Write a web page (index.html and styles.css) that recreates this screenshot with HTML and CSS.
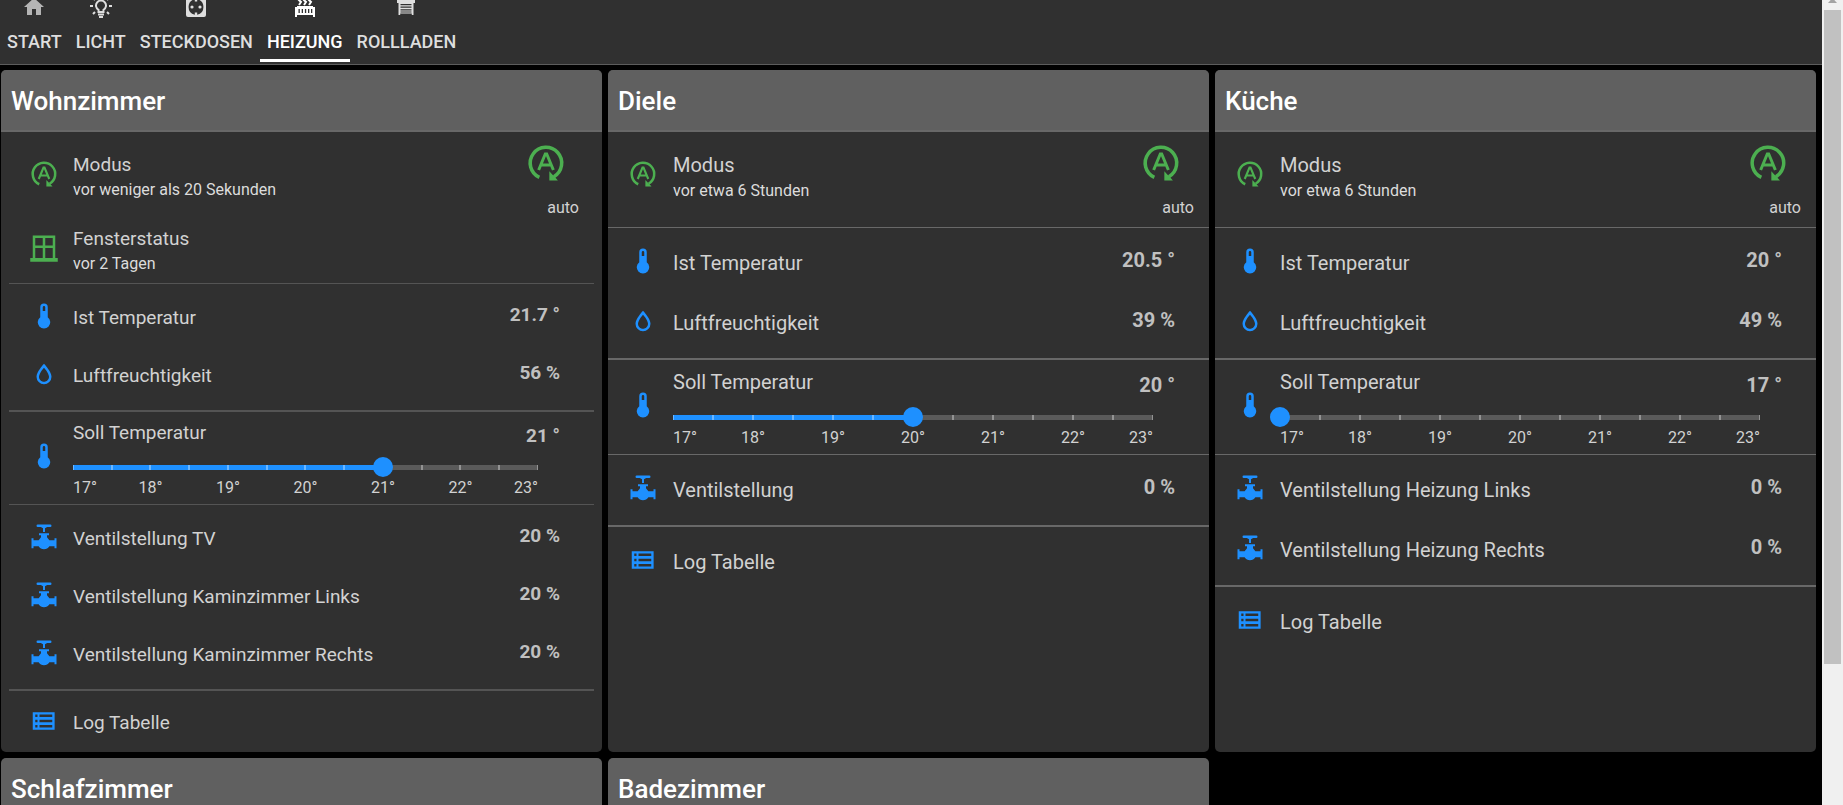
FILE: index.html
```html
<!DOCTYPE html>
<html lang="de">
<head>
<meta charset="utf-8">
<title>Heizung</title>
<link rel="stylesheet" href="styles.css">
</head>
<body>
<svg class="sprite" aria-hidden="true">
  <symbol id="i-home" viewBox="0 0 24 24"><path fill="currentColor" d="M10 20V14H14V20H19V12H22L12 3L2 12H5V20Z"/></symbol>
  <symbol id="i-bulb" viewBox="0 0 24 24"><g fill="none" stroke="currentColor" stroke-width="2"><path d="M9.5 17V14.9A5 5 0 1 1 14.5 14.9V17Z"/><path d="M9 19.5H15M10 22H14M1 11H4M20 11H23M4 3L6 5M20 3L18 5M4 19L6 17M20 19L18 17"/></g></symbol>
  <symbol id="i-socket" viewBox="0 0 24 24"><path fill="currentColor" fill-rule="evenodd" d="M4 2H20A2 2 0 0 1 22 4V20A2 2 0 0 1 20 22H4A2 2 0 0 1 2 20V4A2 2 0 0 1 4 2ZM10.8 4.2A8 8 0 0 0 10.8 19.8V17.5H13.2V19.8A8 8 0 0 0 13.2 4.2V6.5H10.8ZM8 10.4A1.6 1.6 0 1 1 8 13.6A1.6 1.6 0 1 1 8 10.4ZM16 10.4A1.6 1.6 0 1 1 16 13.6A1.6 1.6 0 1 1 16 10.4Z"/></symbol>
  <symbol id="i-radiator" viewBox="0 0 24 24"><path fill="currentColor" fill-rule="evenodd" d="M2 12H4V11H20V12H22V22H20V20H4V22H2ZM5.5 14V18H6.8V14ZM8.7 14V18H10V14ZM11.9 14V18H13.2V14ZM15 14V18H16.3V14ZM18 14V18H19.3V14Z"/><path fill="none" stroke="currentColor" stroke-width="2" d="M6 10L8 7L6 5L8 2M11 10L13 7L11 5L13 2M16 10L18 7L16 5L18 2"/></symbol>
  <symbol id="i-shutter" viewBox="0 0 24 24"><path fill="currentColor" fill-rule="evenodd" d="M3 4H21V8H19.5V20H17.8V18.6H6.2V20H4.5V8H3ZM6.5 9V10.2H17.5V9ZM6.5 11.6V12.8H17.5V11.6ZM6.5 14.2V15.4H17.5V14.2ZM6.5 16.6V17.4H17.5V16.6Z"/></symbol>
  <symbol id="i-auto" viewBox="0 0 24 24"><g fill="none" stroke="currentColor"><path stroke-width="2" d="M8.2 20.2A9 9 0 1 1 16.5 19.8"/><path stroke-width="1.7" d="M7.8 16L11.6 6.8H12.4L16.2 16M9.2 13.2H14.8"/></g><path fill="currentColor" d="M13.9 16.7V22H18.8L17.2 20.2L15.6 18.6Z"/></symbol>
  <symbol id="i-window" viewBox="0 0 24 24"><path fill="currentColor" fill-rule="evenodd" d="M21 20V2H3V20H1V23H23V20ZM11 4V10H5V4ZM19 4V10H13V4ZM11 12V20H5V12ZM19 12V20H13V12Z"/></symbol>
  <symbol id="i-thermo" viewBox="0 0 24 24"><path fill="currentColor" fill-rule="evenodd" d="M15 13V5A3 3 0 0 0 9 5V13A5 5 0 1 0 15 13M12 4A1 1 0 0 1 13 5V8H11V5A1 1 0 0 1 12 4Z"/></symbol>
  <symbol id="i-drop" viewBox="0 0 24 24"><path fill="currentColor" fill-rule="evenodd" d="M12,3.77L11.25,4.61C11.25,4.61 9.97,6.06 8.68,7.94C7.39,9.82 6,12.07 6,14.23A6,6 0 0,0 12,20.23A6,6 0 0,0 18,14.23C18,12.07 16.61,9.82 15.32,7.94C14.03,6.06 12.75,4.61 12.75,4.61L12,3.77M12,6.9C12.44,7.42 12.84,7.85 13.68,9.07C14.89,10.83 16,13.07 16,14.23C16,16.45 14.22,18.23 12,18.23C9.78,18.23 8,16.45 8,14.23C8,13.07 9.11,10.83 10.32,9.07C11.16,7.85 11.56,7.42 12,6.9Z"/></symbol>
  <symbol id="i-valve" viewBox="0 0 24 24"><path fill="currentColor" d="M7 2H17A1 1 0 0 1 17 4H14.5L12.8 5V8H11.2V5L9.5 4H7A1 1 0 0 1 7 2ZM8 9H16V10.6H14.4V12.2L16.3 14.6H20.4V13H22V21H20.4V19.4H16.3A5 5 0 0 1 7.7 19.4H3.6V21H2V13H3.6V14.6H7.7L9.6 12.2V10.6H8Z"/></symbol>
  <symbol id="i-table" viewBox="0 0 24 24"><path fill="currentColor" fill-rule="evenodd" d="M3 5H20.5V19H3ZM5 6.8V8.8H6.8V6.8ZM8.4 6.8V8.8H18.6V6.8ZM5 11V13H6.8V11ZM8.4 11V13H18.6V11ZM5 15.2V17.2H6.8V15.2ZM8.4 15.2V17.2H18.6V15.2Z"/></symbol>
</svg>

<div class="page">
  <header class="topbar">
    <nav class="tabs">
      <a class="tab tab-home" href="#start"><svg class="tab-icon"><use href="#i-home"/></svg><span>START</span></a>
      <a class="tab" href="#licht"><svg class="tab-icon"><use href="#i-bulb"/></svg><span>LICHT</span></a>
      <a class="tab" href="#steckdosen"><svg class="tab-icon"><use href="#i-socket"/></svg><span>STECKDOSEN</span></a>
      <a class="tab tab-active" href="#heizung" aria-current="page"><svg class="tab-icon"><use href="#i-radiator"/></svg><span>HEIZUNG</span></a>
      <a class="tab" href="#rollladen"><svg class="tab-icon"><use href="#i-shutter"/></svg><span>ROLLLADEN</span></a>
    </nav>
  </header>

  <main class="cards">
    <section class="card card-compact">
      <h2 class="card-title">Wohnzimmer</h2>
      <div class="card-body">
        <div class="group group-state">
          <div class="state state-mode">
            <svg class="icon green"><use href="#i-auto"/></svg>
            <div class="state-text"><span class="label">Modus</span><span class="since">vor weniger als 20 Sekunden</span></div>
            <button class="mode" type="button"><svg class="mode-icon"><use href="#i-auto"/></svg><span>auto</span></button>
          </div>
          <div class="state">
            <svg class="icon green"><use href="#i-window"/></svg>
            <div class="state-text"><span class="label">Fensterstatus</span><span class="since">vor 2 Tagen</span></div>
          </div>
        </div>
        <div class="group">
          <div class="row"><svg class="icon"><use href="#i-thermo"/></svg><span class="label">Ist Temperatur</span><span class="value">21.7 °</span></div>
          <div class="row"><svg class="icon"><use href="#i-drop"/></svg><span class="label">Luftfreuchtigkeit</span><span class="value">56 %</span></div>
        </div>
        <div class="group group-target">
          <svg class="icon"><use href="#i-thermo"/></svg>
          <div class="target">
            <div class="target-head"><label class="label" for="soll-wz">Soll Temperatur</label><output class="value" for="soll-wz">21 °</output></div>
            <div class="slider" style="--fill: 66.667%"><input id="soll-wz" type="range" min="17" max="23" step="0.5" value="21"></div>
            <div class="scale"><span>17°</span><span>18°</span><span>19°</span><span>20°</span><span>21°</span><span>22°</span><span>23°</span></div>
          </div>
        </div>
        <div class="group">
          <div class="row"><svg class="icon"><use href="#i-valve"/></svg><span class="label">Ventilstellung TV</span><span class="value">20 %</span></div>
          <div class="row"><svg class="icon"><use href="#i-valve"/></svg><span class="label">Ventilstellung Kaminzimmer Links</span><span class="value">20 %</span></div>
          <div class="row"><svg class="icon"><use href="#i-valve"/></svg><span class="label">Ventilstellung Kaminzimmer Rechts</span><span class="value">20 %</span></div>
        </div>
        <div class="group group-last">
          <a class="row" href="#log-wz"><svg class="icon"><use href="#i-table"/></svg><span class="label">Log Tabelle</span></a>
        </div>
      </div>
    </section>

    <section class="card">
      <h2 class="card-title">Diele</h2>
      <div class="card-body">
        <div class="group group-state">
          <div class="state state-mode">
            <svg class="icon green"><use href="#i-auto"/></svg>
            <div class="state-text"><span class="label">Modus</span><span class="since">vor etwa 6 Stunden</span></div>
            <button class="mode" type="button"><svg class="mode-icon"><use href="#i-auto"/></svg><span>auto</span></button>
          </div>
        </div>
        <div class="group">
          <div class="row"><svg class="icon"><use href="#i-thermo"/></svg><span class="label">Ist Temperatur</span><span class="value">20.5 °</span></div>
          <div class="row"><svg class="icon"><use href="#i-drop"/></svg><span class="label">Luftfreuchtigkeit</span><span class="value">39 %</span></div>
        </div>
        <div class="group group-target">
          <svg class="icon"><use href="#i-thermo"/></svg>
          <div class="target">
            <div class="target-head"><label class="label" for="soll-di">Soll Temperatur</label><output class="value" for="soll-di">20 °</output></div>
            <div class="slider" style="--fill: 50%"><input id="soll-di" type="range" min="17" max="23" step="0.5" value="20"></div>
            <div class="scale"><span>17°</span><span>18°</span><span>19°</span><span>20°</span><span>21°</span><span>22°</span><span>23°</span></div>
          </div>
        </div>
        <div class="group">
          <div class="row"><svg class="icon"><use href="#i-valve"/></svg><span class="label">Ventilstellung</span><span class="value">0 %</span></div>
        </div>
        <div class="group group-last">
          <a class="row" href="#log-di"><svg class="icon"><use href="#i-table"/></svg><span class="label">Log Tabelle</span></a>
        </div>
      </div>
    </section>

    <section class="card">
      <h2 class="card-title">Küche</h2>
      <div class="card-body">
        <div class="group group-state">
          <div class="state state-mode">
            <svg class="icon green"><use href="#i-auto"/></svg>
            <div class="state-text"><span class="label">Modus</span><span class="since">vor etwa 6 Stunden</span></div>
            <button class="mode" type="button"><svg class="mode-icon"><use href="#i-auto"/></svg><span>auto</span></button>
          </div>
        </div>
        <div class="group">
          <div class="row"><svg class="icon"><use href="#i-thermo"/></svg><span class="label">Ist Temperatur</span><span class="value">20 °</span></div>
          <div class="row"><svg class="icon"><use href="#i-drop"/></svg><span class="label">Luftfreuchtigkeit</span><span class="value">49 %</span></div>
        </div>
        <div class="group group-target">
          <svg class="icon"><use href="#i-thermo"/></svg>
          <div class="target">
            <div class="target-head"><label class="label" for="soll-ku">Soll Temperatur</label><output class="value" for="soll-ku">17 °</output></div>
            <div class="slider" style="--fill: 0%"><input id="soll-ku" type="range" min="17" max="23" step="0.5" value="17"></div>
            <div class="scale"><span>17°</span><span>18°</span><span>19°</span><span>20°</span><span>21°</span><span>22°</span><span>23°</span></div>
          </div>
        </div>
        <div class="group">
          <div class="row"><svg class="icon"><use href="#i-valve"/></svg><span class="label">Ventilstellung Heizung Links</span><span class="value">0 %</span></div>
          <div class="row"><svg class="icon"><use href="#i-valve"/></svg><span class="label">Ventilstellung Heizung Rechts</span><span class="value">0 %</span></div>
        </div>
        <div class="group group-last">
          <a class="row" href="#log-ku"><svg class="icon"><use href="#i-table"/></svg><span class="label">Log Tabelle</span></a>
        </div>
      </div>
    </section>

    <section class="card"><h2 class="card-title">Schlafzimmer</h2></section>
    <section class="card"><h2 class="card-title">Badezimmer</h2></section>
  </main>
</div>

<div class="scrollbar" aria-hidden="true">
  <div class="scroll-arrow"></div>
  <div class="scroll-thumb"></div>
</div>
</body>
</html>
```
FILE: styles.css
```css
* {
  box-sizing: border-box;
}

body {
  margin: 0;
  height: 100vh;
  display: flex;
  overflow: hidden;
  background: #000;
  color: #d2d2d2;
  font-family: Roboto, "Liberation Sans", sans-serif;
}

.sprite {
  display: none;
}

a {
  color: inherit;
  text-decoration: none;
}

.page {
  flex: 1;
  min-width: 0;
}

/* Top navigation, scrolled slightly out of view */
.topbar {
  height: 65px;
  overflow: hidden;
  display: flex;
  align-items: flex-end;
  background: #303030;
  border-bottom: 1px solid #5c5c5c;
}

.tabs {
  display: flex;
  padding-bottom: 2px;
}

.tab {
  display: flex;
  flex-direction: column;
  align-items: center;
  padding: 0 7px 4px;
  border-bottom: 3px solid transparent;
  color: #dedede;
  font-size: 18px;
  font-weight: 500;
  line-height: 26px;
}

.tab-icon {
  width: 24px;
  height: 24px;
  margin-bottom: 10px;
}

.tab-home .tab-icon {
  color: #b4b4b4;
}

.tab-active {
  color: #fff;
  border-bottom-color: #fff;
}

/* Room cards */
.cards {
  display: grid;
  grid-template-columns: repeat(3, 1fr);
  gap: 6px;
  padding: 5px 6px 0 1px;
}

.card {
  --row: 60px;
  --gap: 15px;
  --line: #686868;
  --size: 20px;
  --inset: 0;
  --lift: 1px;
  min-width: 0;
  overflow: hidden;
  background: #303030;
  border-radius: 5px;
}

.card-compact {
  --row: 58px;
  --gap: 14px;
  --line: #545454;
  --size: 19px;
  --inset: 8px;
  --lift: 0px;
}

.card-title {
  margin: 0;
  padding: 2px 10px 0;
  background: #606060;
  border-bottom: 2px solid #686868;
  color: #fff;
  font-size: 26px;
  font-weight: 500;
  line-height: 58px;
}

.card-body {
  padding: 0 var(--inset);
}

.group {
  padding: 5px 0;
  border-bottom: 2px solid var(--line);
}

.group-state {
  padding: 0;
  border-bottom-width: 1px;
}

.group-last {
  padding-bottom: 0;
  border-bottom: 0;
}

.card-compact .group-last {
  padding-top: 3px;
}

.row {
  display: flex;
  align-items: center;
  gap: var(--gap);
  height: var(--row);
  padding: 0 34px 0 20px;
}

.icon {
  flex: none;
  width: 30px;
  height: 30px;
  color: #1e90ff;
}

.row .icon {
  margin-bottom: 5px;
}

.green {
  color: #4caf50;
}

.label {
  flex: 1;
  font-size: var(--size);
  line-height: 26px;
}

.value {
  padding-bottom: 6px;
  color: #c0c0c0;
  font-size: var(--size);
  font-weight: 700;
  line-height: 26px;
}

/* State rows with a time stamp */
.state {
  display: flex;
  align-items: flex-start;
  gap: var(--gap);
  padding: 0 15px 8px 20px;
}

.state-mode {
  height: 95px;
  padding-top: 10px;
  padding-bottom: 0;
}

.card-compact .state-mode {
  height: 84px;
}

.state .icon {
  margin-top: 17px;
}

.state-text {
  flex: 1;
  display: flex;
  flex-direction: column;
  gap: var(--lift);
  padding-top: 10px;
}

.state-text .label {
  flex: none;
}

.since {
  color: #dcdcdc;
  font-size: 16px;
  line-height: 23px;
}

.mode {
  display: flex;
  flex-direction: column;
  align-items: flex-end;
  gap: 15px;
  padding: 0;
  border: 0;
  background: none;
  color: #d2d2d2;
  font-family: inherit;
  font-size: 16px;
  line-height: 18px;
}

.mode-icon {
  width: 42px;
  height: 42px;
  margin-right: 12px;
  color: #4caf50;
}

/* Target temperature */
.group-target {
  display: flex;
  align-items: center;
  gap: var(--gap);
  padding: calc(8px + var(--lift)) 34px 5px 20px;
  border-bottom-width: 1px;
}

.group-target .icon {
  margin-bottom: 8px;
}

.target {
  flex: 1;
}

.target-head {
  display: flex;
  align-items: flex-start;
  height: 26px;
}

.target-head .value {
  padding: 3px 0 0;
}

/* The ticks sit on every half degree */
.slider {
  height: 20px;
  display: flex;
  align-items: center;
  margin: calc(11px + var(--lift)) 22px 0 0;
  background:
    repeating-linear-gradient(90deg, rgba(255, 255, 255, 0.35) 0 1px, transparent 1px calc(100% / 12 - 1px), rgba(255, 255, 255, 0.35) calc(100% / 12 - 1px) calc(100% / 12)) center / 100% 5px no-repeat,
    linear-gradient(90deg, #1e90ff var(--fill), #5a5a5a var(--fill)) center / 100% 5px no-repeat;
}

.slider input {
  flex: none;
  width: calc(100% + 20px);
  height: 20px;
  margin: 0 -10px;
  appearance: none;
  background: none;
}

.slider input::-webkit-slider-thumb {
  appearance: none;
  width: 20px;
  height: 20px;
  border-radius: 50%;
  background: #1e90ff;
}

.scale {
  display: grid;
  grid-template-columns: 1fr 2fr 2fr 2fr 2fr 2fr 1fr;
  margin-right: 22px;
  font-size: 16px;
  line-height: 22px;
  text-align: center;
}

.scale span:first-child {
  text-align: left;
}

.scale span:last-child {
  text-align: right;
}

/* Window scrollbar */
.scrollbar {
  flex: none;
  width: 21px;
  display: flex;
  flex-direction: column;
  align-items: center;
  background: #f0f0f0;
}

.scroll-arrow {
  width: 9px;
  height: 3px;
  margin-bottom: 7px;
  background: #a3a3a3;
  clip-path: polygon(30% 0, 70% 0, 100% 100%, 0 100%);
}

.scroll-thumb {
  width: 17px;
  height: 81.25%;
  background: #c1c1c1;
}
```
